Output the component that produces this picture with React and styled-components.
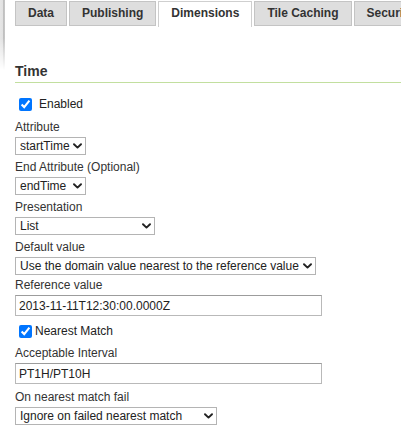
import styled, { createGlobalStyle } from 'styled-components';

const GlobalStyle = createGlobalStyle`
  html, body {
    margin: 0;
    padding: 0;
    background: #fff;
    overflow: hidden;
  }
  body {
    font-family: "Liberation Sans", Arial, sans-serif;
    font-size: 12px;
    color: #333;
  }
`;

const tabs = ['Data', 'Publishing', 'Dimensions', 'Tile Caching', 'Security'];

function Chevron() {
  return (
    <svg width="9" height="6" viewBox="0 0 9 6">
      <path d="M1 1.2l3.5 3.4L8 1.2" fill="none" stroke="#222" strokeWidth="1.9" strokeLinecap="round" strokeLinejoin="round" />
    </svg>
  );
}

function SelectBox({ width, value }) {
  return (
    <Select $width={width}>
      <span>{value}</span>
      <Chevron />
    </Select>
  );
}

function App() {
  return (
    <Page>
      <GlobalStyle />
      <Edge />
      <Main>
        <TabBar>
          {tabs.map((t) => (
            <Tab key={t} $active={t === 'Dimensions'}>{t}</Tab>
          ))}
        </TabBar>

        <Heading>Time</Heading>

        <CheckRow $top={14}>
          <Check type="checkbox" defaultChecked />
          <CheckText $gap={4}>Enabled</CheckText>
        </CheckRow>

        <Field $top={9}>
          <Label>Attribute</Label>
          <SelectBox width={71} value="startTime" />
        </Field>
        <Field $top={5}>
          <Label>End Attribute (Optional)</Label>
          <SelectBox width={71} value="endTime" />
        </Field>
        <Field $top={5}>
          <Label>Presentation</Label>
          <SelectBox width={140} value="List" />
        </Field>
        <Field $top={5}>
          <Label>Default value</Label>
          <SelectBox width={301} value="Use the domain value nearest to the reference value" />
        </Field>
        <Field $top={3}>
          <Label>Reference value</Label>
          <TextInput defaultValue="2013-11-11T12:30:00.0000Z" />
        </Field>

        <CheckRow $top={8}>
          <Check type="checkbox" defaultChecked />
          <CheckText>Nearest Match</CheckText>
        </CheckRow>

        <Field $top={8}>
          <Label>Acceptable Interval</Label>
          <TextInput defaultValue="PT1H/PT10H" />
        </Field>
        <Field $top={6}>
          <Label>On nearest match fail</Label>
          <SelectBox width={202} value="Ignore on failed nearest match" />
        </Field>
      </Main>
    </Page>
  );
}

export default App;

const Page = styled.div`
  display: flex;
  width: 401px;
  height: 435px;
  overflow: hidden;
`;

const Edge = styled.div`
  flex: 0 0 5px;
  height: 72px;
  background: linear-gradient(to right, #e6e6e6 0, #e1e1e1 3px, #bcbcbc 3px, #c9c9c9 5px);
  -webkit-mask-image: linear-gradient(to bottom, #000 38px, transparent 70px);
  mask-image: linear-gradient(to bottom, #000 38px, transparent 70px);
`;

const Main = styled.div`
  flex: 1;
  min-width: 0;
  padding-left: 10px;
`;

const TabBar = styled.div`
  display: flex;
  align-items: flex-start;
  gap: 2px;
  padding-top: 1px;
  height: 26px;
  white-space: nowrap;
`;

const Tab = styled.div`
  flex: none;
  box-sizing: border-box;
  height: ${(p) => (p.$active ? '26px' : '25px')};
  line-height: 23px;
  padding: 0 12px;
  border: 1px solid ${(p) => (p.$active ? '#cfcfcf' : '#c4c4c4')};
  border-bottom: ${(p) => (p.$active ? 'none' : '1px solid #c4c4c4')};
  background: ${(p) => (p.$active ? '#fff' : '#dedede')};
  font-weight: bold;
  font-size: 12px;
  color: #333;
`;

const Heading = styled.h2`
  margin: 36px 0 0;
  padding-bottom: 3px;
  font-size: 14px;
  line-height: 16px;
  font-weight: bold;
  color: #333;
  border-bottom: 1px solid #c2df9f;
`;

const CheckRow = styled.label`
  display: flex;
  align-items: center;
  height: 14px;
  margin-top: ${(p) => p.$top}px;
`;

const Check = styled.input`
  width: 13px;
  height: 13px;
  margin: 0 3px 0 4px;
  accent-color: #0075ff;
`;

const CheckText = styled.span`
  margin-left: ${(p) => p.$gap || 0}px;
  line-height: 14px;
  color: #222;
`;

const Field = styled.div`
  margin-top: ${(p) => p.$top}px;
`;

const Label = styled.div`
  line-height: 14px;
  margin-bottom: 3px;
  color: #333;
`;

const Select = styled.div`
  box-sizing: border-box;
  width: ${(p) => p.$width}px;
  height: 18px;
  display: flex;
  align-items: center;
  justify-content: space-between;
  padding: 0 3px 0 4px;
  border: 1px solid #b4b4b4;
  background: #fff;
  color: #222;
  white-space: nowrap;
  overflow: hidden;

  svg {
    flex: none;
    margin-left: 3px;
  }
`;

const TextInput = styled.input`
  display: block;
  box-sizing: border-box;
  width: 307px;
  height: 21px;
  margin: 0;
  padding: 0 3px;
  border: 1px solid #b9b9b9;
  border-top-color: #9c9c9c;
  border-radius: 0;
  font-family: "Liberation Sans", Arial, sans-serif;
  font-size: 12px;
  color: #222;
  background: #fff;
  outline: none;
`;
